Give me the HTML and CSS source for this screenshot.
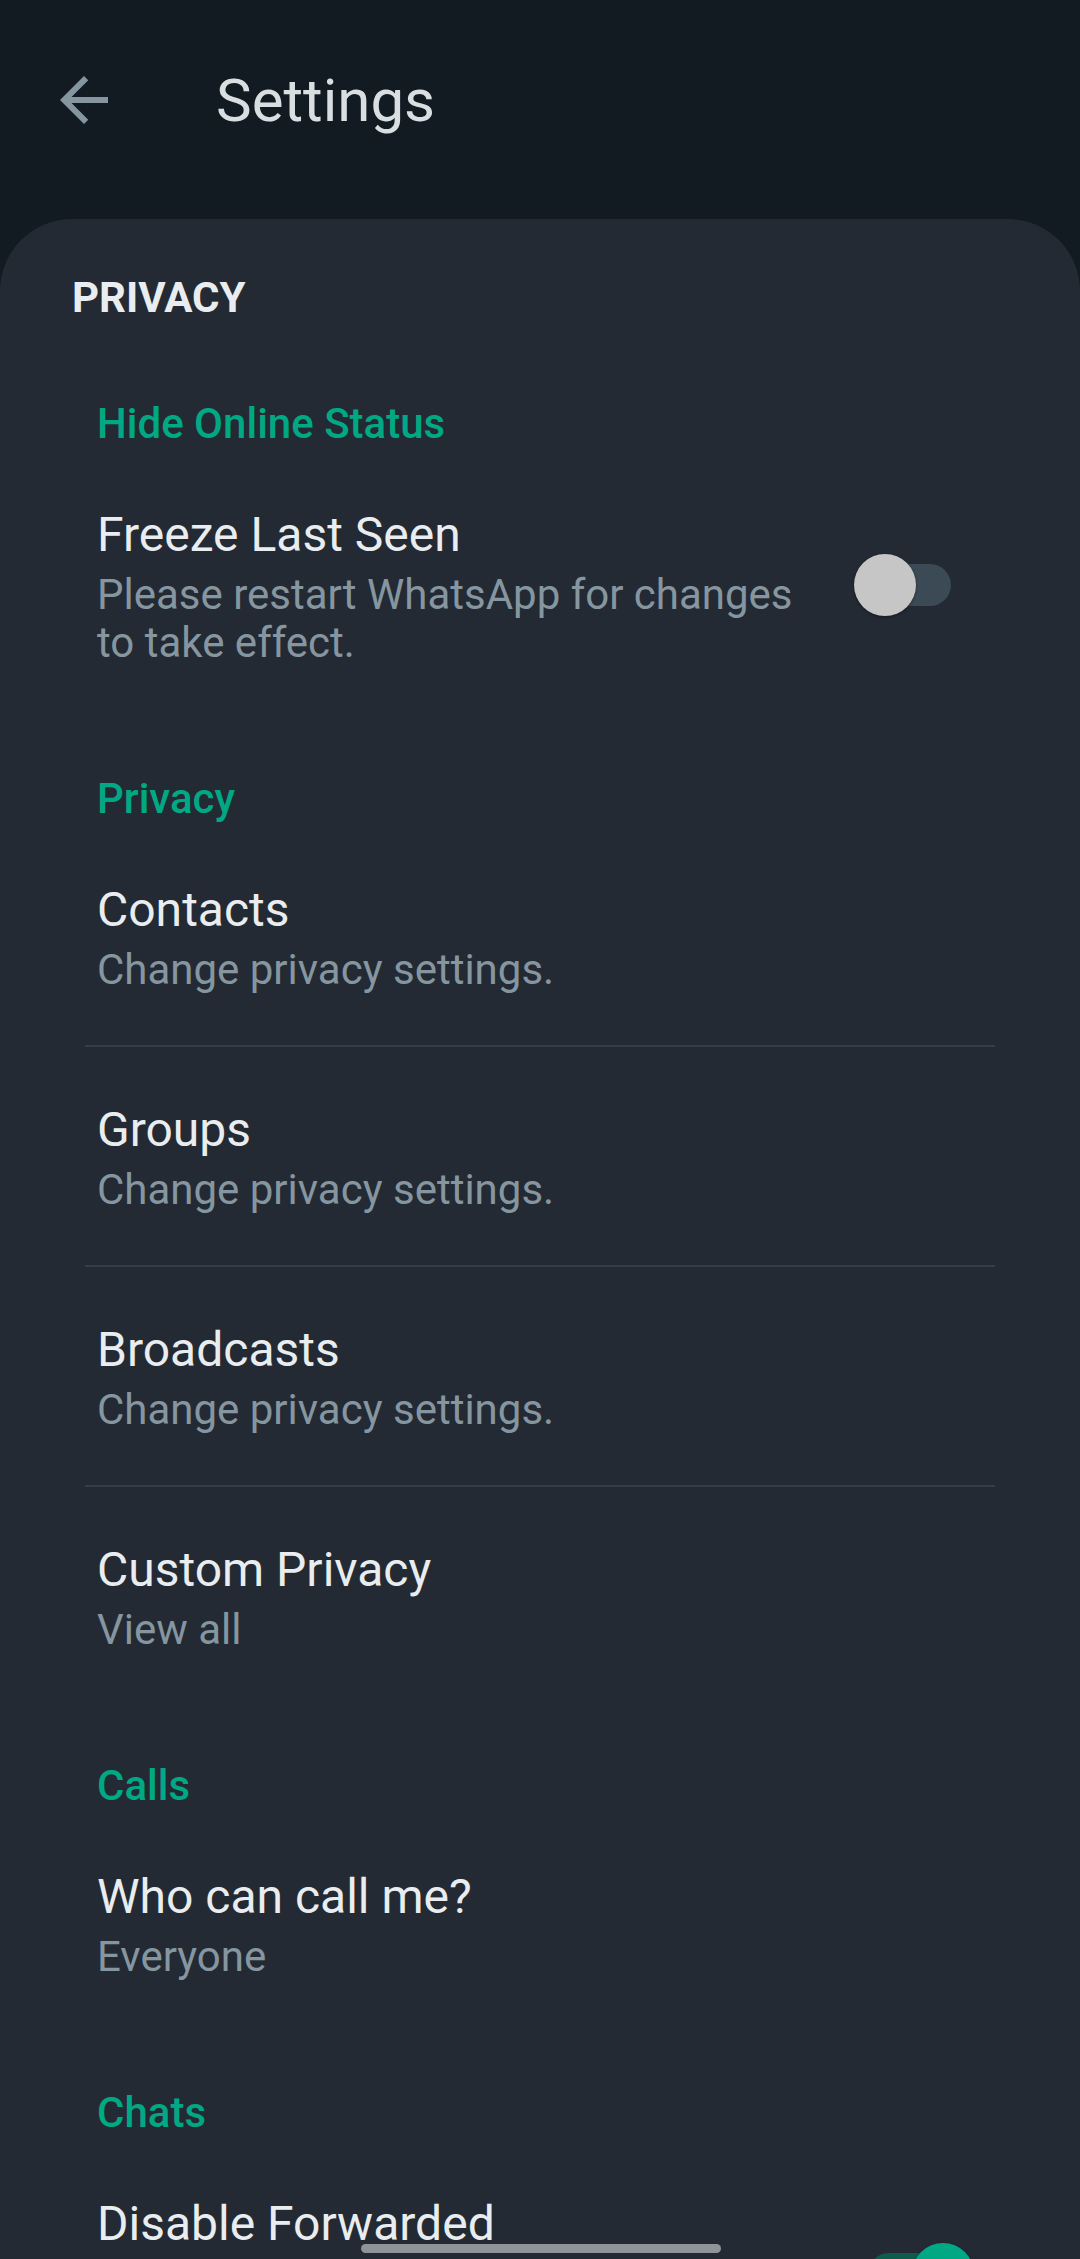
FILE: index.html
```html
<!DOCTYPE html>
<html lang="en">
<head>
    <meta charset="UTF-8">
    <meta name="viewport" content="width=device-width, initial-scale=1.0">
    <title>Settings</title>
    <link rel="stylesheet" href="styles.css">
</head>
<body>

    <header class="toolbar">
        <button class="back-btn" aria-label="Back">
            <svg viewBox="0 0 24 24" width="72" height="72"><path d="M20 11H7.83l5.59-5.59L12 4l-8 8 8 8 1.41-1.41L7.83 13H20v-2z"/></svg>
        </button>
        <h1 class="toolbar-title">Settings</h1>
    </header>

    <main class="sheet">
        <h2 class="sheet-title">PRIVACY</h2>

        <section class="group">
            <h3 class="group-title">Hide Online Status</h3>
            <div class="pref">
                <div class="pref-text">
                    <div class="pref-title">Freeze Last Seen</div>
                    <div class="pref-summary">Please restart WhatsApp for changes to take effect.</div>
                </div>
                <span class="switch"><span class="track"></span><span class="thumb"></span></span>
            </div>
        </section>

        <section class="group">
            <h3 class="group-title">Privacy</h3>
            <div class="pref">
                <div class="pref-text">
                    <div class="pref-title">Contacts</div>
                    <div class="pref-summary">Change privacy settings.</div>
                </div>
            </div>
            <div class="pref">
                <div class="pref-text">
                    <div class="pref-title">Groups</div>
                    <div class="pref-summary">Change privacy settings.</div>
                </div>
            </div>
            <div class="pref">
                <div class="pref-text">
                    <div class="pref-title">Broadcasts</div>
                    <div class="pref-summary">Change privacy settings.</div>
                </div>
            </div>
            <div class="pref">
                <div class="pref-text">
                    <div class="pref-title">Custom Privacy</div>
                    <div class="pref-summary">View all</div>
                </div>
            </div>
        </section>

        <section class="group">
            <h3 class="group-title">Calls</h3>
            <div class="pref">
                <div class="pref-text">
                    <div class="pref-title">Who can call me?</div>
                    <div class="pref-summary">Everyone</div>
                </div>
            </div>
        </section>

        <section class="group">
            <h3 class="group-title">Chats</h3>
            <div class="pref">
                <div class="pref-text">
                    <div class="pref-title">Disable Forwarded</div>
                </div>
                <span class="switch on"><span class="track"></span><span class="thumb"></span></span>
            </div>
        </section>
    </main>

    <div class="nav-handle"></div>

</body>
</html>
```

FILE: styles.css
```css
html, body {
    overflow: hidden;
}
body {
    margin: 0;
    font-family: Roboto, "Noto Sans", sans-serif;
    background-color: #111b21;
    color: #e9edef;
}
.toolbar {
    height: 200px;
    padding-bottom: 19px;
    display: flex;
    align-items: center;
}
.back-btn {
    width: 72px;
    height: 72px;
    margin-left: 48px;
    padding: 0;
    border: none;
    background: none;
}
.back-btn svg {
    display: block;
    fill: #8696a0;
}
.toolbar-title {
    margin: 0 0 0 96px;
    font-size: 60px;
    font-weight: 400;
    color: #d9dee1;
}
.sheet {
    min-height: 2200px;
    padding-top: 54px;
    background-color: #232a33;
    border-radius: 72px 72px 0 0;
}
.sheet-title {
    margin: 0 0 22px 72px;
    font-size: 42px;
    line-height: 50px;
    font-weight: 700;
    color: #e9edef;
}
.group {
    margin: 0 85px;
    padding-top: 53px;
}
.group + .group {
    padding-top: 55px;
}
.group-title {
    margin: 0;
    padding: 1px 0 3px 12px;
    font-size: 42px;
    line-height: 50px;
    font-weight: 500;
    color: #00a884;
}
.pref {
    display: flex;
    gap: 37px;
    padding: 53px 44px 51px 12px;
}
.pref + .pref {
    border-top: 2px solid #353e48;
}
.pref-text {
    flex: 1;
}
.pref-title {
    font-size: 48px;
    line-height: 60px;
    color: #e9edef;
}
.pref-summary {
    margin-top: 6px;
    font-size: 42px;
    line-height: 48px;
    color: #8696a0;
}
.switch {
    position: relative;
    flex: none;
    width: 97px;
    height: 62px;
    margin-top: 49px;
}
.switch .track {
    position: absolute;
    left: 14px;
    right: 0;
    top: 10px;
    height: 42px;
    border-radius: 21px;
    background-color: #3b4a54;
}
.switch .thumb {
    position: absolute;
    left: 0;
    top: 0;
    width: 62px;
    height: 62px;
    border-radius: 50%;
    background-color: #c6c6c6;
    box-shadow: 0 1px 3px rgba(0, 0, 0, 0.4);
}
.switch.on .track {
    background-color: #0e5c4c;
}
.switch.on .thumb {
    left: 58px;
    background-color: #00a884;
}
.nav-handle {
    position: fixed;
    left: 361px;
    bottom: 6px;
    width: 360px;
    height: 9px;
    border-radius: 5px;
    background-color: #8f9499;
}
```
